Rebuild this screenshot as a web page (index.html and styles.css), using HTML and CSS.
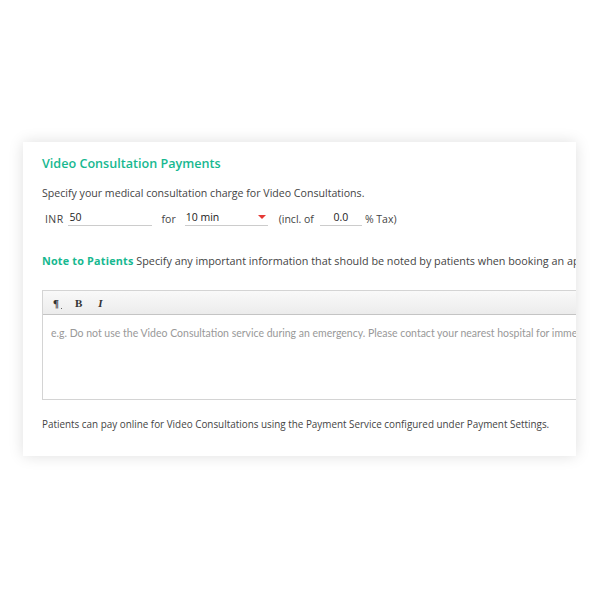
FILE: index.html
```html
<!DOCTYPE html>
<html>
<head>
<meta charset="utf-8">
<link rel="stylesheet" href="styles.css">
</head>
<body>
<div class="page">
  <div class="card">
    <h2 class="title">Video Consultation Payments</h2>
    <p class="desc">Specify your medical consultation charge for Video Consultations.</p>
    <div class="row">
      <span class="lbl">INR</span>
      <span class="field fee">50</span>
      <span class="lbl for">for</span>
      <span class="field select">10 min<span class="caret"></span></span>
      <span class="lbl incl">(incl. of</span>
      <span class="field tax">0.0</span>
      <span class="lbl">% Tax)</span>
    </div>
    <p class="note"><b>Note to Patients</b> Specify any important information that should be noted by patients when booking an appointment.</p>
    <div class="editor">
      <div class="toolbar">
        <span class="tb para">¶<span class="dot"></span></span>
        <span class="tb bold">B</span>
        <span class="tb ital">I</span>
      </div>
      <div class="area">e.g. Do not use the Video Consultation service during an emergency. Please contact your nearest hospital for immediate assistance.</div>
    </div>
    <p class="foot">Patients can pay online for Video Consultations using the Payment Service configured under Payment Settings.</p>
  </div>
</div>
</body>
</html>
```

FILE: styles.css
```css
html, body { margin: 0; padding: 0; background: #fff; }
body { font-family: "Open Sans", "Noto Sans", sans-serif; color: #444; }
.page { width: 600px; height: 600px; padding-top: 142px; padding-left: 23px; box-sizing: border-box; }
.card {
  width: 553px; height: 314px; background: #fff; box-sizing: border-box;
  box-shadow: 0 0 14px rgba(0,0,0,0.13);
  padding: 14px 0 0 19px; overflow: hidden;
}
.title { margin: 0; font-size: 12.6px; font-weight: 600; color: #17b890; line-height: 16px; }
.desc { margin: 14px 0 0; font-size: 10.6px; line-height: 14px; white-space: nowrap; }
.row { display: flex; align-items: flex-end; margin-top: 10px; font-size: 10.5px; line-height: 14px; padding-left: 3px; }
.lbl { white-space: nowrap; }
.lbl:first-child { letter-spacing: 0.4px; }
.field { border-bottom: 1px solid #ccc; color: #222; padding-bottom: 1px; position: relative; }
.fee { width: 82px; margin-left: 4px; padding-left: 2px; }
.for { margin-left: 10px; }
.select { width: 82px; margin-left: 9px; padding-left: 1px; }
.caret { position: absolute; right: 2px; top: 5px; width: 0; height: 0; border-left: 4px solid transparent; border-right: 4px solid transparent; border-top: 4px solid #e53935; }
.incl { margin-left: 11px; }
.tax { width: 42px; margin-left: 6px; text-align: center; margin-right: 3px; }
.note { margin: 28px 0 0; font-size: 10.8px; line-height: 14px; white-space: nowrap; }
.note b { color: #17b890; font-weight: 700; letter-spacing: 0.2px; }
.editor { margin-top: 22px; width: 700px; border: 1px solid #d4d4d4; }
.toolbar { height: 23px; background: linear-gradient(#f9f9f9, #ececec); border-bottom: 1px solid #c4c4c4; display: flex; align-items: center; padding-left: 10px; gap: 16px; }
.tb { font-family: "Liberation Serif", serif; font-weight: 700; font-size: 11px; color: #333; position: relative; }
.ital { font-style: italic; }
.dot { position: absolute; right: -3px; bottom: 0; width: 1px; height: 1px; background: #666; }
.area { height: 84px; box-sizing: border-box; padding: 12px 8px 10px; font-family: "Lato", sans-serif; font-size: 10.5px; color: #999; white-space: nowrap; }
.foot { margin: 17px 0 0; font-size: 9.9px; line-height: 14px; white-space: nowrap; }
```
